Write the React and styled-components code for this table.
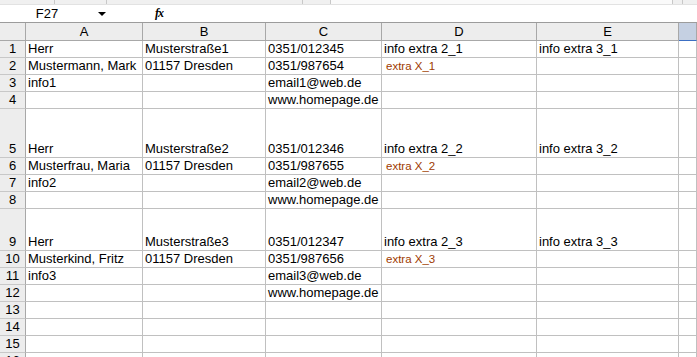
import styled, { createGlobalStyle } from "styled-components"

const Global = createGlobalStyle`
  html, body {
    margin: 0;
    padding: 0;
    background: #fff;
  }
  body {
    font-family: "Liberation Sans", Arial, sans-serif;
    font-size: 13px;
    color: #000;
  }
`

const COLS = "26px 117px 123px 116px 155px 142px 1fr"

const Window = styled.div`
  width: 697px;
  height: 357px;
  overflow: hidden;
  display: flex;
  flex-direction: column;
  background: #fff;
`

const TopStrip = styled.div`
  flex: none;
  height: 5px;
  display: grid;
  grid-template-columns: 55px 52px 196px 28px 342px 10px 1fr;
  background: #f0f0f0;
  border-bottom: 1px solid #e2e2e2;
  box-sizing: border-box;
`

const StripPart = styled.div`
  border-right: 1px solid ${(p) => (p.$plain ? "transparent" : "#c8c8c8")};
  background: ${(p) => (p.$light ? "#fafafa" : "transparent")};
`

const FormulaBar = styled.div`
  flex: none;
  height: 17px;
  display: flex;
  align-items: center;
  background: #fff;
`

const NameBox = styled.div`
  width: 94px;
  text-align: center;
  line-height: 17px;
`

const DropArrow = styled.div`
  width: 0;
  height: 0;
  margin-left: 4px;
  margin-top: 1px;
  border-left: 4px solid transparent;
  border-right: 4px solid transparent;
  border-top: 4px solid #000;
`

const Fx = styled.div`
  margin-left: 49px;
  font-family: "Liberation Serif", "Times New Roman", serif;
  font-style: italic;
  font-weight: bold;
  font-size: 12px;
  letter-spacing: -1px;
`

const Sheet = styled.div`
  flex: none;
  display: flex;
  flex-direction: column;
`

const Row = styled.div`
  display: grid;
  grid-template-columns: ${COLS};
  height: ${(p) => p.$h}px;
  flex: none;
`

const HeaderRow = styled(Row)`
  border-top: 1px solid #9c9c9c;
  box-sizing: border-box;
`

const ColHead = styled.div`
  background: ${(p) => (p.$sel ? "#c5d0e2" : "#ededed")};
  border-right: 1px solid #a8a8a8;
  border-bottom: 1px solid ${(p) => (p.$sel ? "#3c6fc3" : "#a8a8a8")};
  box-sizing: border-box;
  text-align: center;
  line-height: 17px;
`

const RowHead = styled.div`
  background: #ededed;
  border-right: 1px solid #a8a8a8;
  border-bottom: 1px solid #c8c8c8;
  box-sizing: border-box;
  display: flex;
  align-items: flex-end;
  justify-content: center;
  line-height: 16px;
`

const Cell = styled.div`
  border-right: 1px solid #c0c0c0;
  border-bottom: 1px solid #c0c0c0;
  box-sizing: border-box;
  display: flex;
  align-items: flex-end;
  white-space: nowrap;
  overflow: visible;
  line-height: 16px;
  color: ${(p) => (p.$red ? "#9e3a00" : "#000")};
  font-size: ${(p) => (p.$red ? "11.5px" : "13px")};
  padding-left: ${(p) => (p.$red ? "4px" : "2px")};
`

const rows = [
  { n: 1, h: 17, c: ["Herr", "Musterstraße1", "0351/012345", "info extra 2_1", "info extra 3_1"] },
  { n: 2, h: 17, c: ["Mustermann, Mark", "01157 Dresden", "0351/987654", "extra X_1", ""], red: 3 },
  { n: 3, h: 17, c: ["info1", "", "email1@web.de", "", ""] },
  { n: 4, h: 17, c: ["", "", "www.homepage.de", "", ""] },
  { n: 5, h: 49, c: ["Herr", "Musterstraße2", "0351/012346", "info extra 2_2", "info extra 3_2"] },
  { n: 6, h: 17, c: ["Musterfrau, Maria", "01157 Dresden", "0351/987655", "extra X_2", ""], red: 3 },
  { n: 7, h: 17, c: ["info2", "", "email2@web.de", "", ""] },
  { n: 8, h: 17, c: ["", "", "www.homepage.de", "", ""] },
  { n: 9, h: 42, c: ["Herr", "Musterstraße3", "0351/012347", "info extra 2_3", "info extra 3_3"] },
  { n: 10, h: 17, c: ["Musterkind, Fritz", "01157 Dresden", "0351/987656", "extra X_3", ""], red: 3 },
  { n: 11, h: 17, c: ["info3", "", "email3@web.de", "", ""] },
  { n: 12, h: 17, c: ["", "", "www.homepage.de", "", ""] },
  { n: 13, h: 17, c: ["", "", "", "", ""] },
  { n: 14, h: 17, c: ["", "", "", "", ""] },
  { n: 15, h: 17, c: ["", "", "", "", ""] },
  { n: 16, h: 17, c: ["", "", "", "", ""] },
]

const App = () => {
  return (
    <Window>
      <Global />
      <TopStrip>
        <StripPart />
        <StripPart />
        <StripPart />
        <StripPart />
        <StripPart $light />
        <StripPart />
        <StripPart $plain />
      </TopStrip>
      <FormulaBar>
        <NameBox>F27</NameBox>
        <DropArrow />
        <Fx>fx</Fx>
      </FormulaBar>
      <Sheet>
        <HeaderRow $h={19}>
          <ColHead />
          {["A", "B", "C", "D", "E"].map((l) => (
            <ColHead key={l}>{l}</ColHead>
          ))}
          <ColHead $sel />
        </HeaderRow>
        {rows.map((r) => (
          <Row key={r.n} $h={r.h}>
            <RowHead>{r.n}</RowHead>
            {r.c.map((t, i) => (
              <Cell key={i} $red={r.red === i}>
                {t}
              </Cell>
            ))}
            <Cell />
          </Row>
        ))}
      </Sheet>
    </Window>
  )
}

export default App
